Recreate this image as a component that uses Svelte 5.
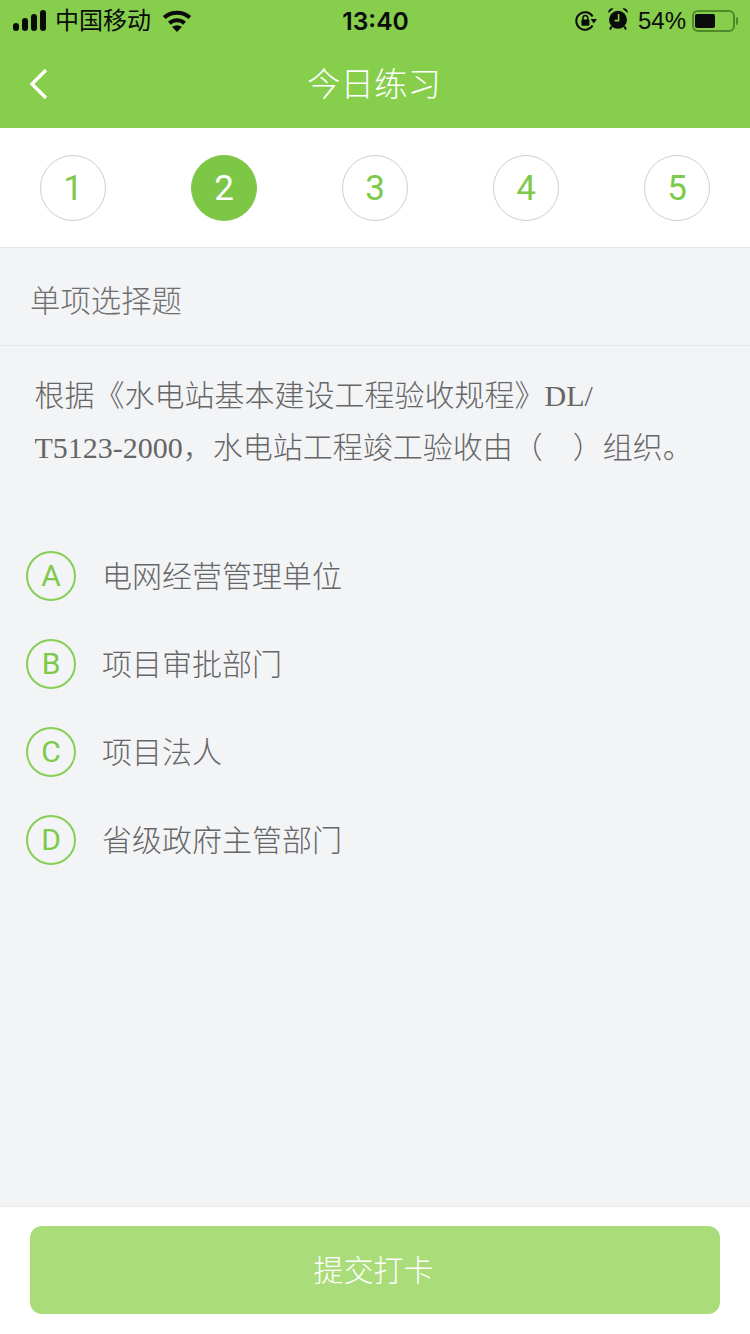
<script>
	const steps = [1, 2, 3, 4, 5];
	const current = 2;
	const options = [
		{ key: 'A', text: '电网经营管理单位' },
		{ key: 'B', text: '项目审批部门' },
		{ key: 'C', text: '项目法人' },
		{ key: 'D', text: '省级政府主管部门' }
	];
</script>

<div class="page">
	<header class="top">
		<div class="status">
			<div class="side">
				<svg class="signal" width="33" height="21" viewBox="0 0 33 21">
					<rect x="0" y="13" width="6" height="8" rx="3" />
					<rect x="9" y="8" width="6" height="13" rx="3" />
					<rect x="18" y="4" width="6" height="17" rx="3" />
					<rect x="27" y="0" width="6" height="21" rx="3" />
				</svg>
				<span class="carrier">中国移动</span>
				<svg class="wifi" width="30" height="22" viewBox="0 0 30 22">
					<path d="M2.2 7.6 A19 19 0 0 1 27.8 7.6" fill="none" stroke="#0b0b0b" stroke-width="4" />
					<path d="M7.4 13.2 A11 11 0 0 1 22.6 13.2" fill="none" stroke="#0b0b0b" stroke-width="4" />
					<path d="M15 22 L10 16.8 Q15 13.6 20 16.8 Z" fill="#0b0b0b" />
				</svg>
			</div>
			<div class="time">13:40</div>
			<div class="side right">
				<svg class="lock" width="22" height="20" viewBox="0 0 22 20">
					<path d="M17.6 14.6 A8.8 8.8 0 1 1 17.6 5.4" fill="none" stroke="#0b0b0b" stroke-width="2" />
					<path d="M15.6 8 L22 8 L18.8 12.4 Z" fill="#0b0b0b" />
					<rect x="6.4" y="8.4" width="8" height="6.4" rx="1" fill="#0b0b0b" />
					<path d="M8 9 V6.8 A2.4 2.4 0 0 1 12.8 6.8 V9" fill="none" stroke="#0b0b0b" stroke-width="1.5" />
				</svg>
				<svg class="alarm" width="20" height="22" viewBox="0 0 20 22">
					<circle cx="10" cy="11.8" r="9" fill="#0b0b0b" />
					<path d="M0.4 5 A3.8 3.8 0 0 1 5.6 0.6 Z M19.6 5 A3.8 3.8 0 0 0 14.4 0.6 Z" fill="#0b0b0b" />
					<path d="M3.6 18.5 L2 21.4 M16.4 18.5 L18 21.4" stroke="#0b0b0b" stroke-width="2" />
					<path d="M10.6 6 V12.6 H6.6" fill="none" stroke="#86ce4c" stroke-width="1.6" />
				</svg>
				<span class="pct">54%</span>
				<div class="battery">
					<div class="shell"><div class="level"></div></div>
					<div class="nub"></div>
				</div>
			</div>
		</div>
		<div class="nav">
			<svg class="back" width="20" height="32" viewBox="0 0 20 32">
				<path d="M17 2 L3 16 L17 30" fill="none" stroke="#fff" stroke-width="3.4" />
			</svg>
			<h1>今日练习</h1>
		</div>
	</header>

	<div class="steps">
		{#each steps as n}
			<div class="step" class:active={n === current}>{n}</div>
		{/each}
	</div>

	<div class="kind">单项选择题</div>

	<main class="body">
		<p class="question">根据《水电站基本建设工程验收规程》DL/<br />T5123-2000，水电站工程竣工验收由（&nbsp;&nbsp;&nbsp;&nbsp;）组织。</p>

		<ul class="options">
			{#each options as o}
				<li>
					<span class="letter">{o.key}</span>
					<span class="label">{o.text}</span>
				</li>
			{/each}
		</ul>
	</main>

	<footer class="foot">
		<button class="submit">提交打卡</button>
	</footer>
</div>

<style>
	:global(body) {
		margin: 0;
		background: #f3f4f6;
	}

	.page {
		width: 750px;
		height: 1334px;
		display: flex;
		flex-direction: column;
		overflow: hidden;
		background: #f3f4f6;
		font-family: 'Liberation Serif', 'Noto Sans CJK SC', serif;
		color: #666;
	}

	.top {
		height: 128px;
		background: #86ce4c;
		flex-shrink: 0;
	}

	.status {
		height: 40px;
		padding: 1px 12px 0 13px;
		box-sizing: border-box;
		display: flex;
		align-items: center;
		color: #0b0b0b;
		font-family: 'Liberation Sans', 'Noto Sans CJK SC', sans-serif;
		font-size: 24px;
	}

	.side {
		flex: 1;
		display: flex;
		align-items: center;
	}

	.side.right {
		justify-content: flex-end;
	}

	.signal {
		fill: #0b0b0b;
		margin-right: 9px;
	}

	.carrier {
		line-height: 39px;
	}

	.wifi {
		margin-left: 11px;
		margin-top: 1px;
	}

	.time {
		font-family: Inter, 'Liberation Sans', sans-serif;
		font-size: 24.6px;
		font-weight: 600;
	}

	.lock {
		margin-right: 11px;
	}

	.alarm {
		margin-right: 10px;
		margin-top: -3px;
	}

	.pct {
		margin-right: 6px;
	}

	.battery {
		display: flex;
		align-items: center;
	}

	.shell {
		width: 43px;
		height: 22px;
		box-sizing: border-box;
		border: 2px solid #4f8a2a;
		border-radius: 6px;
		padding: 2px 1px;
	}

	.level {
		width: 20px;
		height: 14px;
		background: #0b0b0b;
		border-radius: 2px;
	}

	.nub {
		width: 2px;
		height: 8px;
		margin-left: 1px;
		background: #4f8a2a;
		border-radius: 0 2px 2px 0;
	}

	.nav {
		position: relative;
		height: 88px;
		display: flex;
		align-items: center;
		justify-content: center;
	}

	.back {
		position: absolute;
		left: 29px;
		top: 28px;
	}

	h1 {
		margin: 0 2px 4px 0;
		color: #fff;
		font-family: 'Noto Sans CJK SC', sans-serif;
		font-size: 33.5px;
		font-weight: 300;
		line-height: 1;
	}

	.steps {
		height: 119px;
		flex-shrink: 0;
		padding: 0 40px;
		display: flex;
		align-items: center;
		justify-content: space-between;
		background: #fff;
		border-bottom: 1px solid #e4e5e7;
	}

	.step {
		width: 66px;
		height: 66px;
		box-sizing: border-box;
		padding-top: 1px;
		border: 1px solid #cfcfcf;
		border-radius: 50%;
		display: flex;
		align-items: center;
		justify-content: center;
		color: #7dc94a;
		font-family: Roboto, 'Liberation Sans', sans-serif;
		font-size: 35px;
		font-weight: 400;
	}

	.step.active {
		background: #7cc846;
		border-color: #7cc846;
		color: #fff;
	}

	.kind {
		height: 91px;
		flex-shrink: 0;
		padding: 6px 0 0 30px;
		display: flex;
		align-items: center;
		border-bottom: 1px solid #e6e7e9;
		font-family: 'Noto Sans CJK SC', sans-serif;
		font-size: 30.4px;
		font-weight: 300;
		line-height: 1;
		color: #6f6f6f;
	}

	.body {
		flex: 1;
		padding: 24px 0 0;
	}

	.question {
		margin: 0;
		padding: 0 34.5px;
		font-size: 30px;
		line-height: 52px;
		font-weight: 300;
		color: #666;
		white-space: nowrap;
	}

	.options {
		list-style: none;
		margin: 58px 0 0;
		padding: 0 0 0 26px;
	}

	li {
		height: 88px;
		display: flex;
		align-items: center;
	}

	.letter {
		width: 50px;
		height: 50px;
		box-sizing: border-box;
		padding-bottom: 2px;
		border: 2px solid #87cf55;
		border-radius: 50%;
		display: flex;
		align-items: center;
		justify-content: center;
		color: #7dc94a;
		font-family: Roboto, 'Liberation Sans', sans-serif;
		font-size: 30px;
		font-weight: 400;
		flex-shrink: 0;
	}

	.label {
		margin: 0 0 4px 26px;
		font-family: 'Noto Sans CJK SC', sans-serif;
		font-size: 30px;
		font-weight: 300;
		color: #666;
	}

	.foot {
		height: 108px;
		flex-shrink: 0;
		padding: 19px 30px 0;
		background: #fff;
		border-top: 1px solid #e8e9eb;
		margin-top: auto;
	}

	.submit {
		display: block;
		width: 690px;
		height: 88px;
		border: 0;
		border-radius: 12px;
		background: #aadc79;
		color: #fff;
		font-family: 'Noto Sans CJK SC', sans-serif;
		font-size: 30px;
		font-weight: 300;
		padding: 0 3px 4px 0;
	}
</style>
